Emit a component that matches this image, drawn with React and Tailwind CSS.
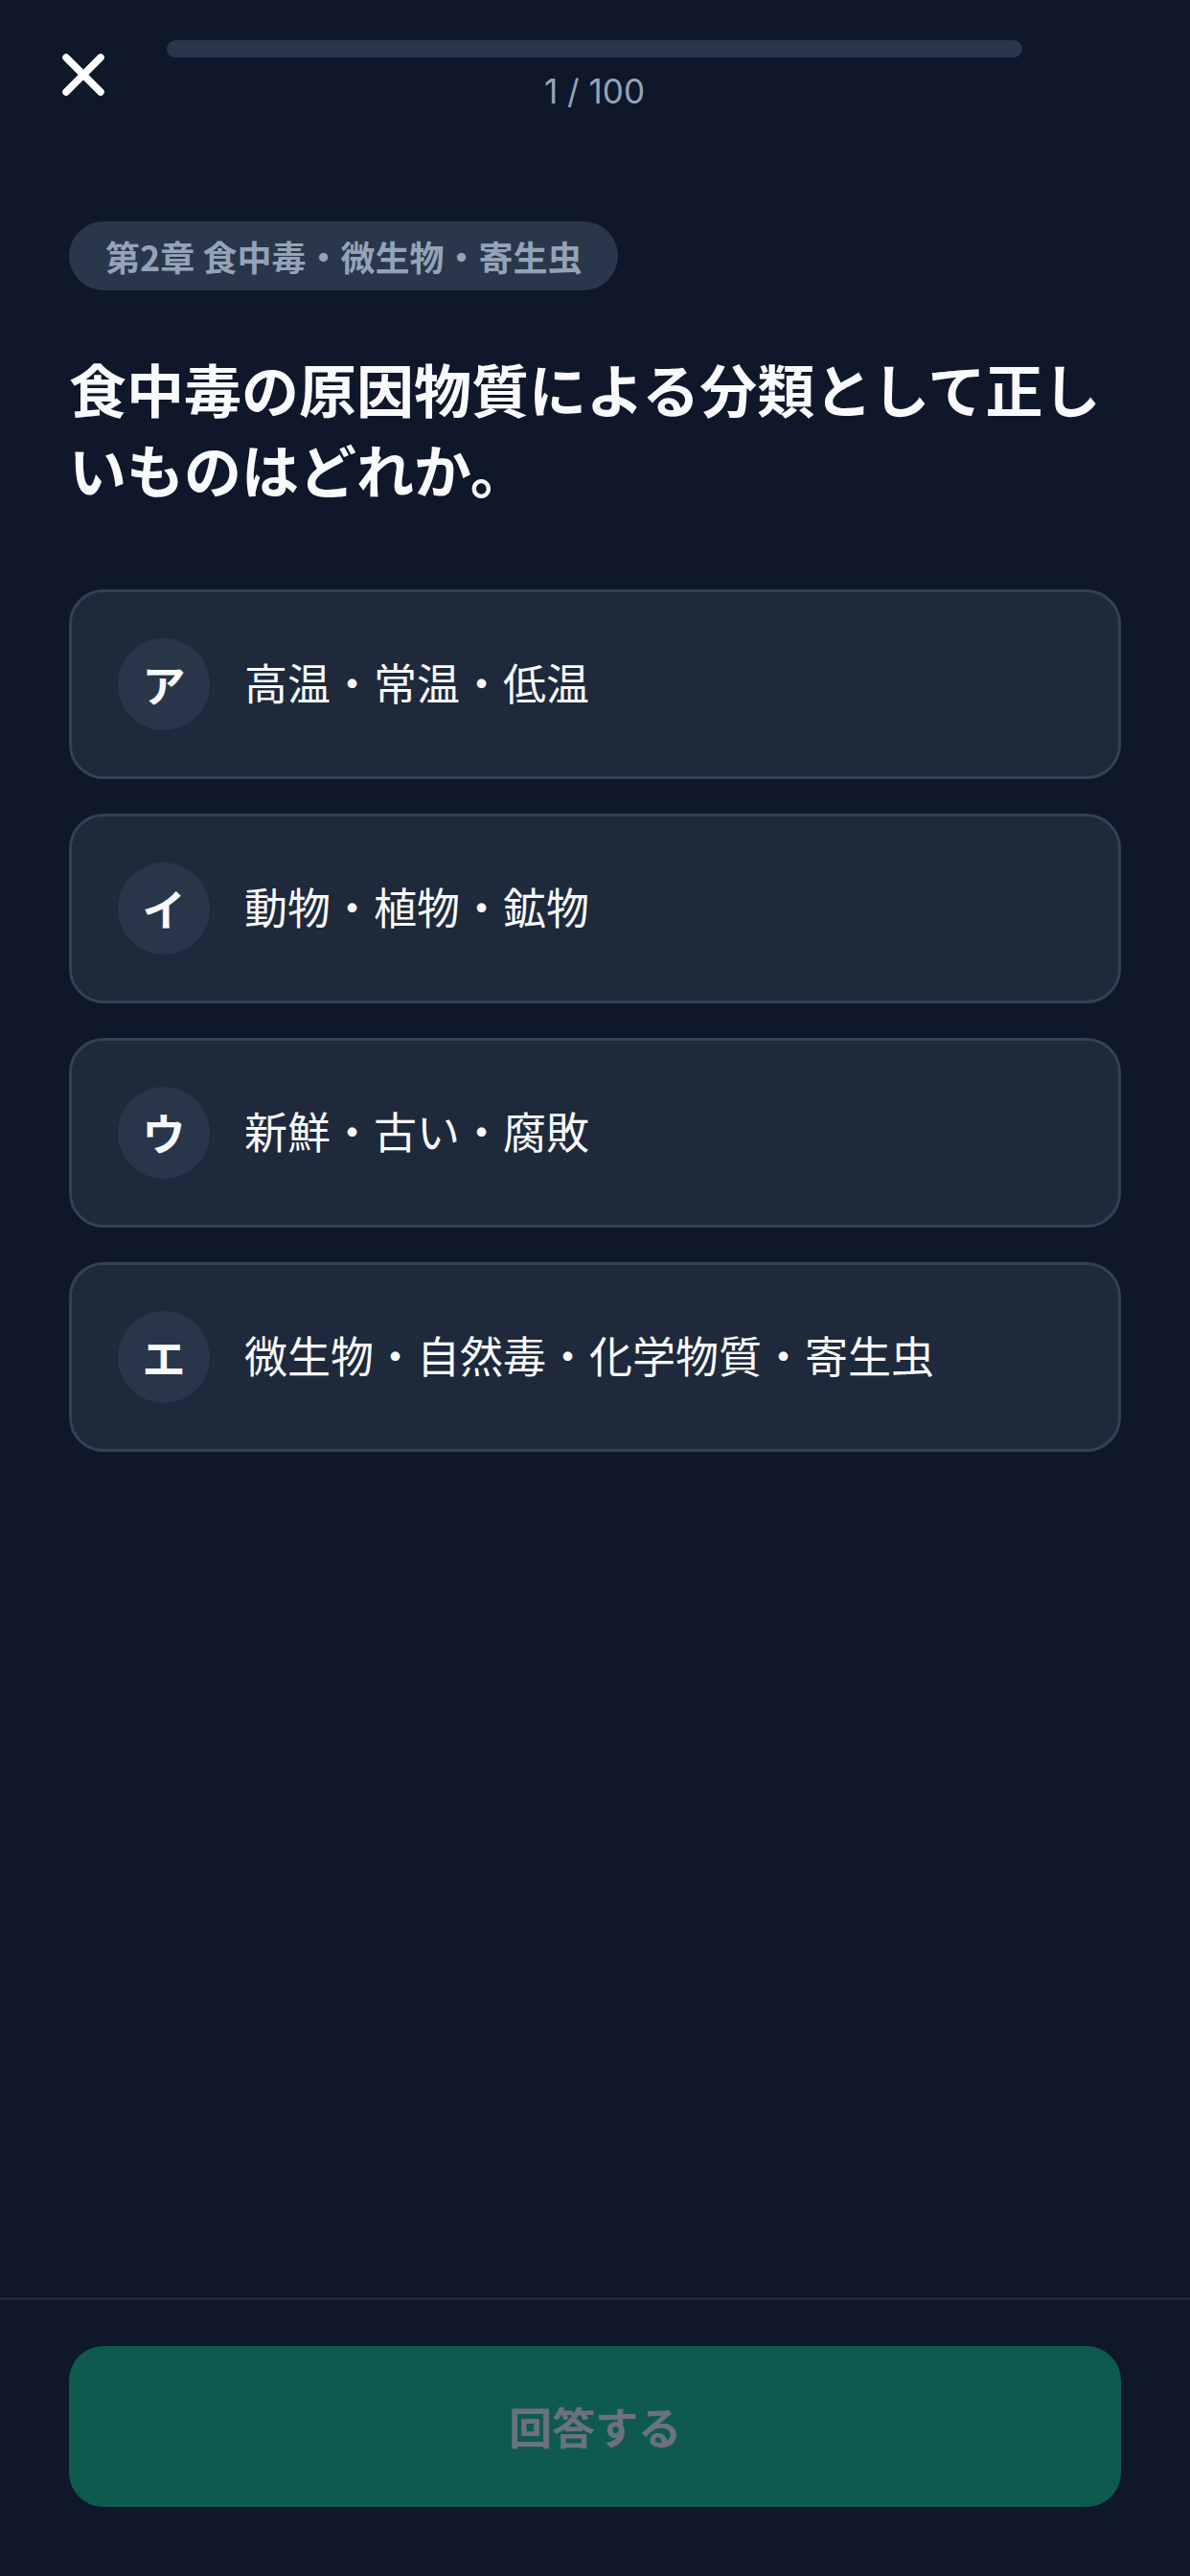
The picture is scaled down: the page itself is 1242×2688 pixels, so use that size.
import React from 'react';
import { X } from 'lucide-react';

const jp = { fontFamily: '"Noto Sans CJK JP", "Noto Sans", sans-serif' };

const options = [
  { key: 'ア', text: '高温・常温・低温' },
  { key: 'イ', text: '動物・植物・鉱物' },
  { key: 'ウ', text: '新鮮・古い・腐敗' },
  { key: 'エ', text: '微生物・自然毒・化学物質・寄生虫' },
];

const OptionCard = ({ option }) => (
  <button className="flex items-center gap-[36px] p-[48px] border-[3px] border-[#334155] bg-[#1e293b] rounded-[36px] text-left w-full">
    <div className="w-[96px] h-[96px] shrink-0 rounded-full bg-[#293649] flex items-center justify-center text-[45px] font-bold text-[#f8fafc]">
      {option.key}
    </div>
    <span className="text-[45px] text-[#f8fafc] leading-[60px] -mt-[5px]">{option.text}</span>
  </button>
);

export default function App() {
  return (
    <div className="w-[1242px] h-[2688px] bg-[#0f172a] flex flex-col" style={jp}>
      {/* Header */}
      <div className="flex items-start pt-[42px]">
        <div className="w-[174px] pl-[51px]">
          <button className="w-[72px] h-[72px] flex items-center justify-center text-white">
            <X size={72} strokeWidth={2.5} />
          </button>
        </div>
        <div className="flex-1 flex flex-col items-center">
          <div className="w-full h-[18px] rounded-full bg-[#293548]" />
          <div
            className="mt-[10px] text-[35px] leading-[50px] text-[#94a3b8]"
            style={{ fontFamily: 'Inter, "Noto Sans", sans-serif' }}
          >
            1 / 100
          </div>
        </div>
        <div className="w-[175px]" />
      </div>

      {/* Question */}
      <div className="flex-1 px-[72px] pt-[111px]">
        <div className="inline-flex items-center h-[72px] px-[38px] rounded-full bg-[#2a3649] text-[36px] font-bold text-[#94a3b8]">
          第2章 食中毒・微生物・寄生虫
        </div>
        <h1 className="mt-[60px] text-[60px] font-bold leading-[84px] text-[#f8fafc]">
          食中毒の原因物質による分類として正しいものはどれか。
        </h1>
        <div className="mt-[84px] flex flex-col gap-[36px]">
          {options.map((option) => (
            <OptionCard key={option.key} option={option} />
          ))}
        </div>
      </div>

      {/* Footer */}
      <div className="border-t-[3px] border-[#1e293b] px-[72px] pt-[48px] pb-[72px]">
        <button className="w-full h-[168px] rounded-[36px] bg-[#0f5a4e] flex items-center justify-center text-[45px] font-bold text-[#6b727f]">
          回答する
        </button>
      </div>
    </div>
  );
}
